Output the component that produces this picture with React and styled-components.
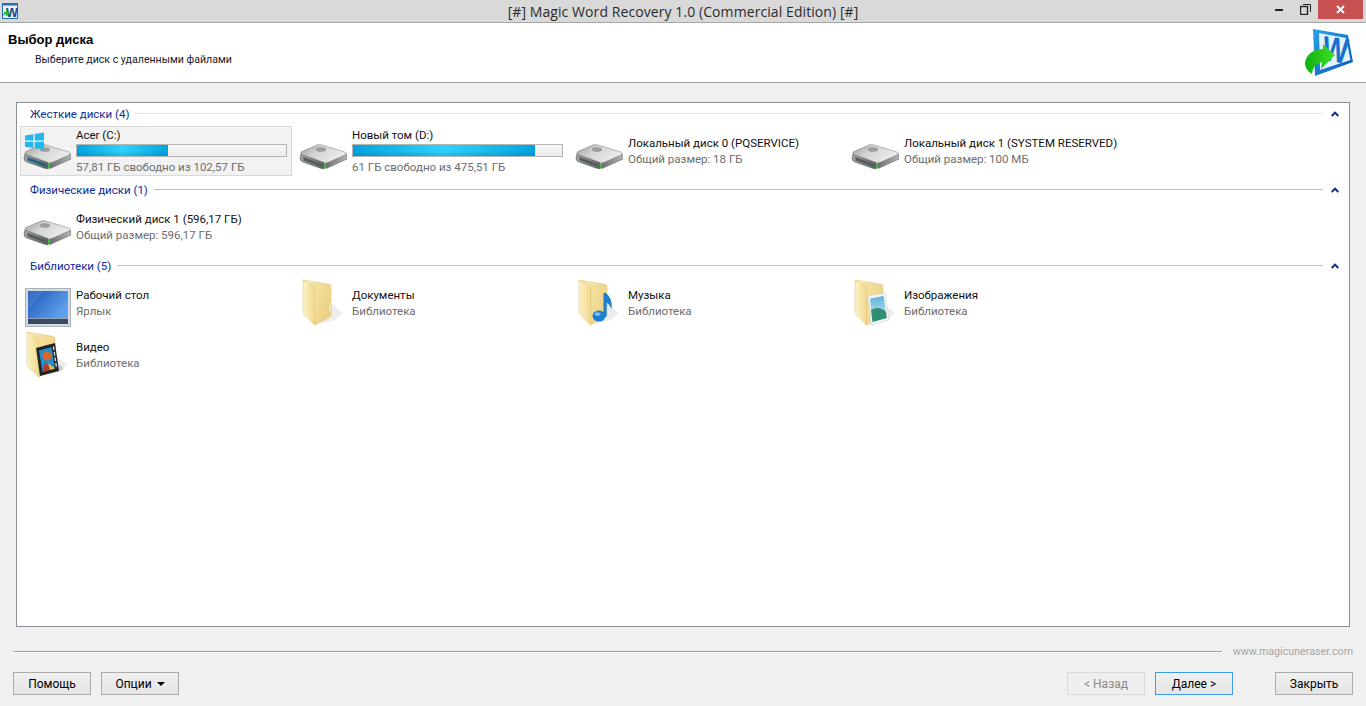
import React from "react";
import styled, { createGlobalStyle } from "styled-components";

const GlobalStyle = createGlobalStyle`
  html, body { margin: 0; padding: 0; height: 100%; overflow: hidden; }
  body { background: #f0f0f0; font-family: Roboto, "Liberation Sans", Arial, sans-serif; font-size: 11.5px; color: #000; }
`;

const Window = styled.div`
  width: 1366px;
  height: 706px;
  display: flex;
  flex-direction: column;
  background: #f0f0f0;
`;

const TitleBar = styled.div`
  height: 22px;
  display: grid;
  grid-template-columns: 100px 1fr 100px;
  align-items: start;
  background: #d9d9d9;
  border-bottom: 1px solid #a6a6a6;
`;

const AppIcon = styled.div`
  padding: 3px 0 0 2px;
  line-height: 0;
`;

const WindowTitle = styled.div`
  font-family: "Open Sans", "Noto Sans", sans-serif;
  font-size: 14px;
  letter-spacing: 0.08px;
  line-height: 24px;
  text-align: center;
  color: #2b2b2b;
`;

const WindowControls = styled.div`
  display: flex;
  justify-content: flex-end;
  padding-right: 3px;
`;

const ControlBtn = styled.div`
  width: ${(p) => p.$w}px;
  height: 19px;
  display: flex;
  align-items: center;
  justify-content: center;
  background: ${(p) => (p.$close ? "#c75050" : "transparent")};
`;

const Header = styled.div`
  height: 59px;
  display: flex;
  justify-content: space-between;
  background: #fff;
  border-bottom: 1px solid #a0a0a0;
`;

const HeaderTitle = styled.div`
  padding: 8px 0 0 8px;
  font-family: "Liberation Sans", Arial, sans-serif;
  font-size: 13px;
  font-weight: 700;
  line-height: 17px;
`;

const HeaderSub = styled.div`
  padding: 4px 0 0 27px;
  font-family: Roboto, "Liberation Sans", sans-serif;
  font-size: 10.6px;
  font-weight: 400;
  line-height: 16px;
  color: #1a1a2a;
`;

const HeaderLogo = styled.div`
  padding: 4px 11px 0 0;
  line-height: 0;
`;

const Panel = styled.div`
  margin: 19px 16px 0 16px;
  height: 525px;
  box-sizing: border-box;
  padding: 0 3px;
  background: #fff;
  border: 1px solid #8a8f96;
`;

const GroupHead = styled.div`
  height: 21px;
  display: flex;
  align-items: center;
  padding: 0 7px 2px 10px;
  font-size: 11.5px;
  color: #0a2d9a;
  gap: 6px;
`;

const GroupLine = styled.div`
  flex: 1;
  height: 1px;
  margin-right: 2px;
  background: ${(p) => (p.$faint ? "#e0e3ef" : "#b4bdd2")};
`;

const TileGrid = styled.div`
  display: grid;
  grid-template-columns: repeat(auto-fill, 272px);
  column-gap: 4px;
  row-gap: 2px;
  margin-bottom: 3px;
`;

const Tile = styled.div`
  height: 50px;
  box-sizing: border-box;
  display: flex;
  align-items: center;
  gap: 5px;
  padding: 0 4px 0 2px;
  background: ${(p) => (p.$active ? "#f2f2f2" : "transparent")};
  border: 1px solid ${(p) => (p.$active ? "#d9d9d9" : "transparent")};
`;

const TileIcon = styled.div`
  width: 48px;
  height: 48px;
  flex: none;
  line-height: 0;
`;

const TileText = styled.div`
  flex: 1;
  min-width: 0;
`;

const TileName = styled.div`
  line-height: 16px;
  color: #111;
  white-space: nowrap;
`;

const TileInfo = styled.div`
  line-height: 16px;
  color: #6d6d6d;
  white-space: nowrap;
`;

const Bar = styled.div`
  height: 13px;
  margin: 1px 0 2px;
  box-sizing: border-box;
  border: 1px solid #b5b5b5;
  background: linear-gradient(#f7f7f7, #ececec);
`;

const BarFill = styled.div`
  height: 100%;
  background: linear-gradient(90deg, #05a3dc 0%, #2fd2fa 50%, #05a3dc 100%);
  box-shadow: inset 0 -3px 2px rgba(0, 70, 140, 0.16);
`;

const Footer = styled.div`
  flex: 1;
  display: flex;
  flex-direction: column;
  padding: 16px 13px 0 13px;
`;

const FooterRule = styled.div`
  display: flex;
  align-items: center;
  gap: 11px;
  height: 16px;
`;

const RuleLine = styled.div`
  flex: 1;
  height: 1px;
  background: #a0a0a0;
  box-shadow: 0 1px 0 #fff;
`;

const SiteLink = styled.div`
  font-size: 10.7px;
  color: #a6a6a6;
`;

const ButtonRow = styled.div`
  display: flex;
  gap: 10px;
  margin-top: 13px;
`;

const Spacer = styled.div`
  flex: 1;
`;

const Btn = styled.button`
  width: 78px;
  height: 23px;
  padding: 0;
  margin-left: ${(p) => p.$gapLeft || 0}px;
  font: 12px Roboto, "Liberation Sans", Arial, sans-serif;
  color: ${(p) => (p.disabled ? "#8a8a8a" : "#000")};
  background: ${(p) => (p.disabled ? "#efefef" : "linear-gradient(#f0f0f0, #e5e5e5)")};
  border: 1px solid ${(p) => (p.disabled ? "#d9d9d9" : p.$primary ? "#3d9bef" : "#acacac")};
`;

const Caret = styled.span`
  display: inline-block;
  margin-left: 5px;
  vertical-align: 2px;
  border-left: 4px solid transparent;
  border-right: 4px solid transparent;
  border-top: 4px solid #000;
`;

function Grads() {
  return (
    <defs>
      <linearGradient id="folderBack" x1="0" y1="0" x2="1" y2="0.6">
        <stop offset="0" stopColor="#f9eab0" />
        <stop offset="1" stopColor="#ecd184" />
      </linearGradient>
      <linearGradient id="folderFront" x1="0" y1="0" x2="1" y2="0">
        <stop offset="0" stopColor="#fdf3c6" />
        <stop offset="1" stopColor="#f1d98f" />
      </linearGradient>
      <linearGradient id="hddTop" x1="0" y1="0" x2="1" y2="0.5">
        <stop offset="0" stopColor="#989898" />
        <stop offset="0.45" stopColor="#d4d4d4" />
        <stop offset="1" stopColor="#ececec" />
      </linearGradient>
      <linearGradient id="hddFront" x1="0" y1="0" x2="1" y2="0">
        <stop offset="0" stopColor="#a2a6a6" />
        <stop offset="1" stopColor="#5f6363" />
      </linearGradient>
      <linearGradient id="hddSide" x1="0" y1="0" x2="1" y2="0">
        <stop offset="0" stopColor="#6f6f6f" />
        <stop offset="1" stopColor="#b4b4b4" />
      </linearGradient>
      <linearGradient id="screen" x1="0" y1="0" x2="1" y2="0.6">
        <stop offset="0" stopColor="#1c56b8" />
        <stop offset="1" stopColor="#5ea2ec" />
      </linearGradient>
      <linearGradient id="logoBlue" x1="0" y1="0" x2="1" y2="1">
        <stop offset="0" stopColor="#29a3ea" />
        <stop offset="1" stopColor="#0b55b8" />
      </linearGradient>
      <linearGradient id="logoGreen" x1="0" y1="0" x2="1" y2="0">
        <stop offset="0" stopColor="#10b010" />
        <stop offset="1" stopColor="#3fe02a" />
      </linearGradient>
      <linearGradient id="photoSky" x1="0" y1="0" x2="0" y2="1">
        <stop offset="0" stopColor="#5db4dc" />
        <stop offset="1" stopColor="#d6eef2" />
      </linearGradient>
    </defs>
  );
}

function HddIcon({ system, tinted }) {
  return (
    <svg width="48" height="48" viewBox="0 0 48 48">
      <Grads />
      <path d="M2 27 L25 35.5 L25 41.5 Q24 42 21 41 L4 35 Q1 34 1 31 Z" fill="url(#hddFront)" stroke="#4d5050" strokeWidth="0.6" />
      <path d="M4 30 L23 37 L23 40 L5 33.6 Z" fill={tinted ? "#1b6680" : "#565b5c"} />
      <path d="M27 36 L47 27 Q48 27 48 29 L48 32 L27 41.5 Z" fill="url(#hddSide)" stroke="#666" strokeWidth="0.6" />
      <path d="M2 27 Q1 25 4 24 L18 18 Q20 17 23 18 L46 25 Q48 26 46 28 L30 35 Q27 36 24 35 Z" fill="url(#hddTop)" stroke="#7d7d7d" strokeWidth="0.5" />
      <ellipse cx="22" cy="22.5" rx="5" ry="2.3" fill="#8a8a8a" opacity="0.75" />
      <path d="M25 36 L27 36.4 L27 41.5 L25 41.5 Z" fill="#37c032" />
      {system && (
        <g fill="#22b8ee">
          <path d="M2 8.5 L10.5 7.2 L10.5 13.5 L2 13.5 Z" />
          <path d="M11.8 7 L21 5.6 L21 13.5 L11.8 13.5 Z" />
          <path d="M2 14.8 L10.5 14.8 L10.5 21 L2 19.8 Z" />
          <path d="M11.8 14.8 L21 14.8 L21 22.5 L11.8 21.2 Z" />
        </g>
      )}
    </svg>
  );
}

function FolderIcon({ children }) {
  return (
    <svg width="48" height="48" viewBox="0 0 48 48">
      <Grads />
      <path d="M15 46 L32 38 L32 24 L44 34 L36 41 Z" fill="#000" opacity="0.07" />
      <path d="M4 1 L31 5.5 Q32 6 32 8 L32 37.5 L15.5 46 Z" fill="url(#folderBack)" stroke="#dcc277" strokeWidth="0.5" />
      <path d="M4 1 L14.5 7.5 Q15.5 8 15.5 10 L15.5 46 L5 35.5 Q4 34.5 4 33 Z" fill="url(#folderFront)" stroke="#dcc277" strokeWidth="0.5" />
      {children}
    </svg>
  );
}

function MonitorIcon() {
  return (
    <svg width="48" height="48" viewBox="0 0 48 48">
      <Grads />
      <rect x="2" y="9" width="46" height="39" fill="#aab3bd" />
      <rect x="3" y="10" width="44" height="37" fill="#d2d9e0" />
      <rect x="5" y="12" width="40" height="27" fill="url(#screen)" />
      <path d="M5 12 L20 12 L5 31 Z" fill="#fff" opacity="0.1" />
      <rect x="5" y="39" width="40" height="6" fill="#3e4a5e" />
      <rect x="5" y="39" width="40" height="1" fill="#8fa0b8" />
    </svg>
  );
}

const docsOverlay = <path d="M30 21 L32 24 L32 32 L30 34 Z" fill="#fbf2c8" stroke="#d7c37c" strokeWidth="0.5" />;

const musicOverlay = (
  <g>
    <ellipse cx="24" cy="37" rx="6.5" ry="5.5" fill="#1c7fd0" />
    <path d="M28.5 37 L28.5 14 L31 14 Q38 20 36.5 30 Q35 26 31.8 23.5 L31.5 38 Z" fill="#1c7fd0" />
    <ellipse cx="22.5" cy="35" rx="3" ry="1.8" fill="#7cc2f0" />
  </g>
);

const photoOverlay = (
  <g>
    <path d="M17 17 L34 14 L38 41 L20 46 Z" fill="#f6f6f6" stroke="#c8c8c8" strokeWidth="0.5" />
    <path d="M19 19.5 L32.5 17 L35.8 39 L21.5 43 Z" fill="url(#photoSky)" />
    <path d="M20 31 Q28 26 35 33 L35.8 39 L21.5 43 Z" fill="#2f8f72" />
  </g>
);

const videoOverlay = (
  <g>
    <path d="M13 17 L32 12 L36 40 L17 45 Z" fill="#232323" />
    <path d="M16 19.5 L28.5 16 L32 37.5 L19.5 41 Z" fill="#1f8fd0" />
    <circle cx="24" cy="25" r="4.6" fill="#d8662a" />
    <path d="M19.5 41 L22 31 L30 38 Z" fill="#b93a2a" />
    <path d="M25 32 L32 37.5 L27 39 Z" fill="#e8c040" />
    <path d="M29.8 15.5 L31 15.2 L31.6 19 L30.4 19.3 Z M30.6 21 L31.8 20.7 L32.4 24.5 L31.2 24.8 Z M31.4 26.5 L32.6 26.2 L33.2 30 L32 30.3 Z M32.2 32 L33.4 31.7 L34 35.5 L32.8 35.8 Z" fill="#e8e8e8" />
    <path d="M36 40 L41 38 L36 33 Z" fill="#000" opacity="0.15" />
  </g>
);

function HeaderMark() {
  return (
    <svg width="50" height="50" viewBox="0 0 50 50">
      <Grads />
      <path d="M8 2 L43 8 L48 35 L10 49 Z" fill="url(#logoBlue)" />
      <path d="M14 6 L41 11 L45.5 33 L15 43 Z" fill="#e2f2fc" />
      <text
        fontFamily="Liberation Sans, sans-serif"
        fontWeight="700"
        fontSize="27"
        fill="#1570cc"
        transform="translate(16 33) rotate(8) scale(1 1.3)"
      >
        W
      </text>
      <path d="M30 28 L18 17 L18 22 Q2 23 0 36 Q0 43 7 47 Q8 37 17 35 L16 42 Z" fill="url(#logoGreen)" />
    </svg>
  );
}

function TitleMark() {
  return (
    <svg width="16" height="16" viewBox="0 0 16 16">
      <rect x="0.5" y="0.5" width="15" height="15" fill="#eaf3fa" stroke="#2a6db5" />
      <rect x="0" y="0" width="16" height="2.5" fill="#2a6db5" />
      <text x="4" y="14" fontFamily="Liberation Sans, sans-serif" fontWeight="700" fontSize="12.5" fill="#15479c">
        W
      </text>
      <path d="M1 13 Q1 9 4 8.5 L4 6.5 L8.5 10 L4 13.5 L4 11 Q2.5 11 1 13 Z" fill="#1fb81f" />
    </svg>
  );
}

const groups = [
  {
    title: "Жесткие диски (4)",
    faint: true,
    items: [
      { icon: <HddIcon system tinted />, name: "Acer (C:)", info: "57,81 ГБ свободно из 102,57 ГБ", fill: 43.6, active: true },
      { icon: <HddIcon />, name: "Новый том (D:)", info: "61 ГБ свободно из 475,51 ГБ", fill: 87 },
      { icon: <HddIcon />, name: "Локальный диск 0 (PQSERVICE)", info: "Общий размер: 18 ГБ" },
      { icon: <HddIcon />, name: "Локальный диск 1 (SYSTEM RESERVED)", info: "Общий размер: 100 МБ" },
    ],
  },
  {
    title: "Физические диски (1)",
    items: [{ icon: <HddIcon />, name: "Физический диск 1 (596,17 ГБ)", info: "Общий размер: 596,17 ГБ" }],
  },
  {
    title: "Библиотеки (5)",
    items: [
      { icon: <MonitorIcon />, name: "Рабочий стол", info: "Ярлык" },
      { icon: <FolderIcon>{docsOverlay}</FolderIcon>, name: "Документы", info: "Библиотека" },
      { icon: <FolderIcon>{musicOverlay}</FolderIcon>, name: "Музыка", info: "Библиотека" },
      { icon: <FolderIcon>{photoOverlay}</FolderIcon>, name: "Изображения", info: "Библиотека" },
      { icon: <FolderIcon>{videoOverlay}</FolderIcon>, name: "Видео", info: "Библиотека" },
    ],
  },
];

export default function App() {
  return (
    <Window>
      <GlobalStyle />
      <TitleBar>
        <AppIcon>
          <TitleMark />
        </AppIcon>
        <WindowTitle>[#] Magic Word Recovery 1.0 (Commercial Edition) [#]</WindowTitle>
        <WindowControls>
          <ControlBtn $w={27}>
            <svg width="9" height="3"><rect width="8" height="2" y="1" fill="#222" /></svg>
          </ControlBtn>
          <ControlBtn $w={26}>
            <svg width="11" height="11" viewBox="0 0 11 11" fill="none" stroke="#222">
              <rect x="0.5" y="2.5" width="7" height="8" strokeWidth="1.4" />
              <path d="M3 .5 H10.5 V8" />
            </svg>
          </ControlBtn>
          <ControlBtn $w={45} $close>
            <svg width="9" height="9" viewBox="0 0 9 9" stroke="#fff" strokeWidth="2">
              <path d="M1 1 L8 8 M8 1 L1 8" />
            </svg>
          </ControlBtn>
        </WindowControls>
      </TitleBar>

      <Header>
        <HeaderTitle>
          Выбор диска
          <HeaderSub>Выберите диск с удаленными файлами</HeaderSub>
        </HeaderTitle>
        <HeaderLogo>
          <HeaderMark />
        </HeaderLogo>
      </Header>

      <Panel>
        {groups.map((group) => (
          <div key={group.title}>
            <GroupHead>
              {group.title}
              <GroupLine $faint={group.faint} />
              <svg width="8" height="6" viewBox="0 0 8 6" fill="none" stroke="#0a2d8a" strokeWidth="2">
                <path d="M0.7 5 L4 1.6 L7.3 5" />
              </svg>
            </GroupHead>
            <TileGrid>
              {group.items.map((item) => (
                <Tile key={item.name} $active={item.active}>
                  <TileIcon>{item.icon}</TileIcon>
                  <TileText>
                    <TileName>{item.name}</TileName>
                    {item.fill && (
                      <Bar>
                        <BarFill style={{ width: `${item.fill}%` }} />
                      </Bar>
                    )}
                    <TileInfo>{item.info}</TileInfo>
                  </TileText>
                </Tile>
              ))}
            </TileGrid>
          </div>
        ))}
      </Panel>

      <Footer>
        <FooterRule>
          <RuleLine />
          <SiteLink>www.magicuneraser.com</SiteLink>
        </FooterRule>
        <ButtonRow>
          <Btn>Помощь</Btn>
          <Btn>
            Опции
            <Caret />
          </Btn>
          <Spacer />
          <Btn disabled>&lt; Назад</Btn>
          <Btn $primary>Далее &gt;</Btn>
          <Btn $gapLeft={32}>Закрыть</Btn>
        </ButtonRow>
      </Footer>
    </Window>
  );
}
